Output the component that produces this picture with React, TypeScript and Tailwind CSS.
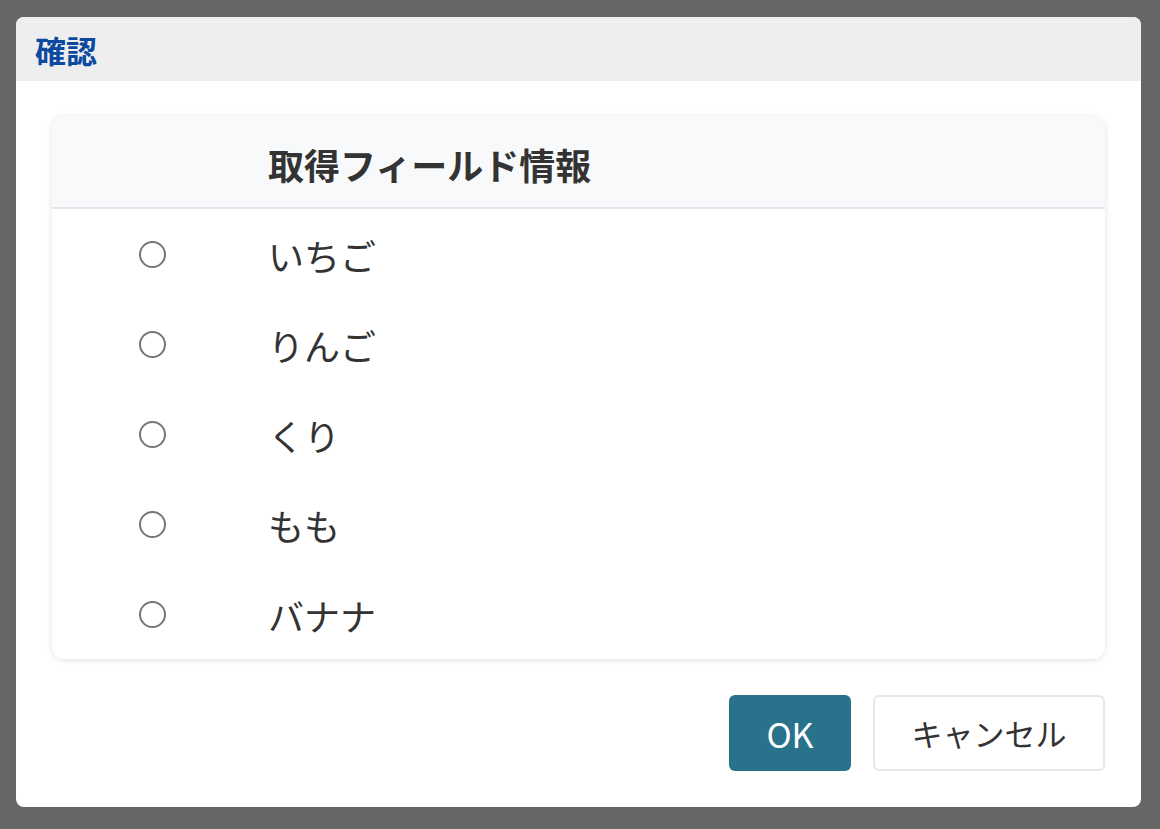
import React from "react";

const items = ["いちご", "りんご", "くり", "もも", "バナナ"];

export default function App() {
  return (
    <div
      className="w-[1160px] h-[829px] bg-[#666666] pt-[17px] pl-[16px]"
      style={{ fontFamily: '"Noto Sans CJK JP", "Noto Sans", sans-serif' }}
    >
      <div className="w-[1125px] h-[790px] bg-white rounded-[8px] overflow-hidden flex flex-col">
        <div className="h-[64px] bg-[#eeeeee] flex items-center pl-[19px] shrink-0">
          <span className="text-[31px] font-bold text-[#0b4aa0] leading-none">確認</span>
        </div>
        <div className="px-[36px] pt-[35px]">
          <div className="rounded-[12px] bg-white shadow-[0_1px_6px_rgba(0,0,0,0.12)] overflow-hidden">
            <div className="h-[93px] bg-[#f8f9fb] border-b-2 border-[#e4e6ea] flex items-center">
              <div className="w-[200px]" />
              <div className="pl-[16px] pt-[5px] text-[36px] font-bold text-[#333333] leading-none">取得フィールド情報</div>
            </div>
            {items.map((it) => (
              <div key={it} className="h-[90px] flex items-center">
                <div className="w-[200px] flex justify-center">
                  <span className="w-[27px] h-[27px] rounded-full border-2 border-[#767676] bg-white box-border" />
                </div>
                <div className="pl-[16px] pt-[2px] text-[36px] text-[#333333] leading-none">{it}</div>
              </div>
            ))}
          </div>
        </div>
        <div className="flex justify-end gap-[22px] pr-[36px] pt-[36px]">
          <button className="w-[122px] h-[76px] rounded-[6px] bg-[#28728c] text-white text-[34px] flex items-center justify-center">
            OK
          </button>
          <button className="w-[232px] h-[76px] rounded-[6px] border-2 border-[#e6e6ec] bg-white text-[#333333] text-[31px] flex items-center justify-center">
            キャンセル
          </button>
        </div>
      </div>
    </div>
  );
}
